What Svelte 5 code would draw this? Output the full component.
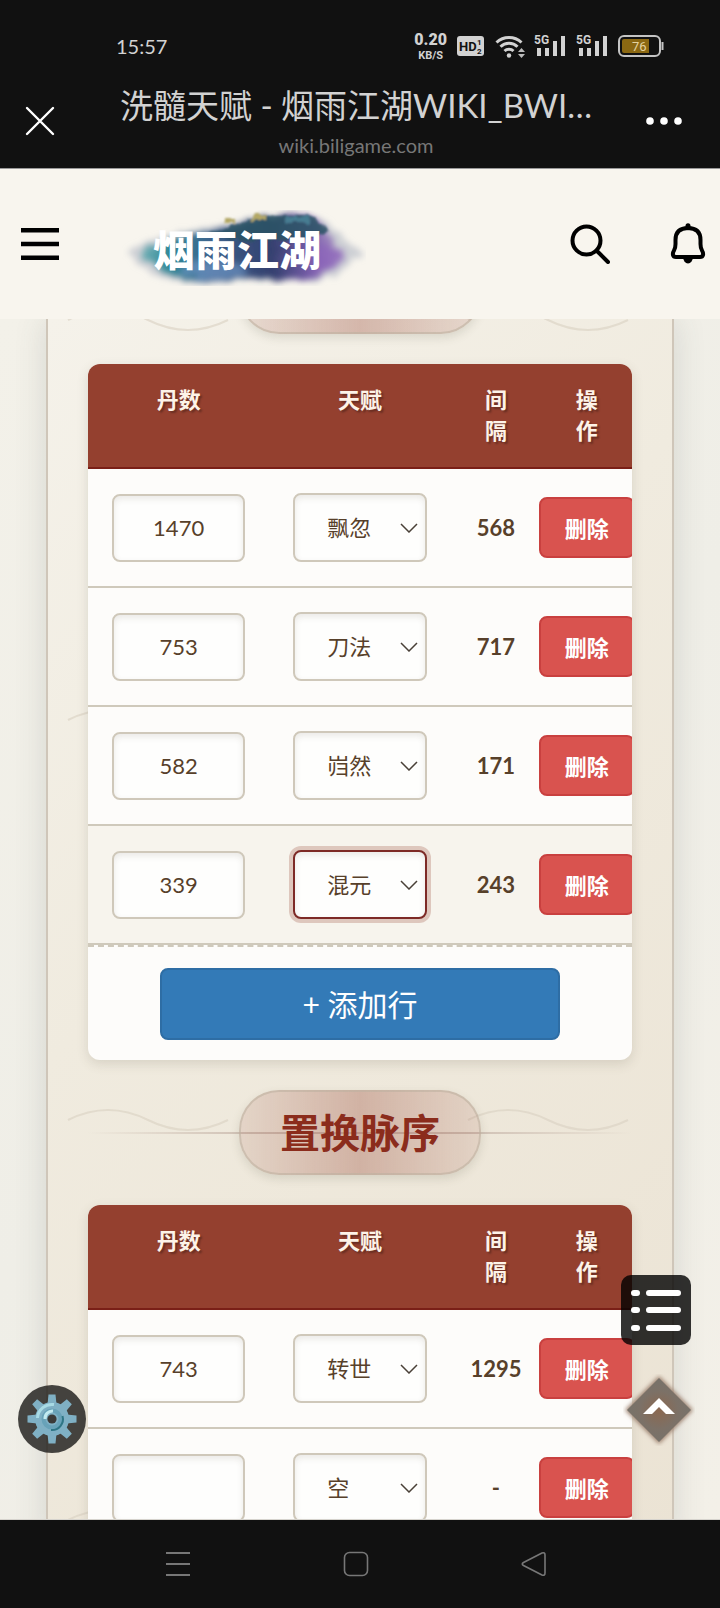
<script lang="ts">
  type Fila = { dan: string; talento: string; intervalo: string; activa?: boolean };

  const talentos = ['飘忽', '刀法', '岿然', '混元', '转世', '空'];

  let primera: Fila[] = $state([
    { dan: '1470', talento: '飘忽', intervalo: '568' },
    { dan: '753', talento: '刀法', intervalo: '717' },
    { dan: '582', talento: '岿然', intervalo: '171' },
    { dan: '339', talento: '混元', intervalo: '243', activa: true }
  ]);

  let segunda: Fila[] = $state([
    { dan: '743', talento: '转世', intervalo: '1295' },
    { dan: '', talento: '空', intervalo: '-' }
  ]);

  function agregar(filas: Fila[]) {
    filas.push({ dan: '', talento: '空', intervalo: '-' });
  }
</script>

{#snippet tabla(filas: Fila[])}
  <table>
    <thead>
      <tr>
        <th class="wide">丹数</th>
        <th class="wide">天赋</th>
        <th>间隔</th>
        <th>操作</th>
      </tr>
    </thead>
    <tbody>
      {#each filas as fila, i}
        <tr class:active={fila.activa}>
          <td><input type="text" inputmode="numeric" aria-label="丹数" bind:value={fila.dan} /></td>
          <td>
            <select aria-label="天赋" bind:value={fila.talento}>
              {#each talentos as t}
                <option value={t}>{t}</option>
              {/each}
            </select>
          </td>
          <td class="gap">{fila.intervalo}</td>
          <td>
            <div class="action">
              <button class="delete" onclick={() => filas.splice(i, 1)}>删除</button>
            </div>
          </td>
        </tr>
      {/each}
    </tbody>
  </table>
{/snippet}

{#snippet senal()}
  <svg width="32" height="24" viewBox="0 0 32 24" fill="#d2d2d2">
    <text x="0" y="10" font-size="12" font-weight="700">5G</text>
    <rect x="3" y="14" width="4" height="8" />
    <rect x="11" y="14" width="4" height="8" />
    <rect x="19" y="7" width="4" height="15" />
    <rect x="27" y="2" width="4" height="20" />
  </svg>
{/snippet}

<div class="phone">
  <div class="status">
    <span class="clock">15:57</span>
    <div class="indicators">
      <div class="speed"><b>0.20</b><span>KB/S</span></div>
      <svg width="28" height="20" viewBox="0 0 28 20">
        <rect width="27" height="20" rx="3" fill="#d2d2d2" />
        <text x="2" y="15" font-size="13" font-weight="700" fill="#111">HD</text>
        <text x="20" y="9" font-size="8" font-weight="700" fill="#111">1</text>
        <text x="20" y="18" font-size="8" font-weight="700" fill="#111">2</text>
      </svg>
      <svg class="wifi" width="31" height="25" viewBox="0 0 31 25" fill="none" stroke="#d2d2d2" stroke-width="3">
        <path d="M1.5 8.5a18 18 0 0 1 25 0M5.5 12.8a12 12 0 0 1 17 0M9.5 17a6.5 6.5 0 0 1 9 0" />
        <circle cx="14" cy="21.5" r="2.2" fill="#d2d2d2" stroke="none" />
        <path d="M23 18l3.5-4 3.5 4zM23 20l3.5 4 3.5-4z" fill="#bbb" stroke="none" />
      </svg>
      {@render senal()}
      {@render senal()}
      <svg width="46" height="22" viewBox="0 0 46 22">
        <rect x="1" y="1" width="41" height="20" rx="5" fill="none" stroke="#c4c4c4" stroke-width="2" />
        <path d="M44.5 7v8" stroke="#c4c4c4" stroke-width="2" />
        <path d="M6 4h25v14H6a2 2 0 0 1-2-2V6a2 2 0 0 1 2-2z" fill="#8b6812" />
        <text x="14" y="16" font-size="13" fill="#e5d3a0">76</text>
      </svg>
    </div>
  </div>

  <div class="titlebar">
    <button class="plain close" aria-label="关闭">
      <svg width="30" height="30" viewBox="0 0 30 30" stroke="#fff" stroke-width="2.4" stroke-linecap="round">
        <path d="M2 2l26 26M28 2L2 28" />
      </svg>
    </button>
    <div class="heading">
      <div class="page-title">洗髓天赋 - 烟雨江湖WIKI_BWI…</div>
      <div class="url">wiki.biligame.com</div>
    </div>
    <button class="plain" aria-label="更多">
      <svg width="36" height="10" viewBox="0 0 36 10" fill="#fff">
        <circle cx="4" cy="5" r="3.8" /><circle cx="18" cy="5" r="3.8" /><circle cx="32" cy="5" r="3.8" />
      </svg>
    </button>
  </div>

  <header class="site">
    <button class="plain" aria-label="菜单">
      <svg width="40" height="34" viewBox="0 0 40 34" stroke="#000" stroke-width="4.4">
        <path d="M1 3.2h38M1 17h38M1 30.8h38" />
      </svg>
    </button>
    <a class="logo" href="#top" aria-label="烟雨江湖">
      <svg width="244" height="76" viewBox="0 0 244 76">
        <defs>
          <filter id="ink" x="-10%" y="-20%" width="120%" height="140%">
            <feTurbulence type="fractalNoise" baseFrequency="0.09" numOctaves="3" seed="4" />
            <feDisplacementMap in="SourceGraphic" scale="10" xChannelSelector="R" yChannelSelector="G" />
            <feGaussianBlur stdDeviation="3" />
          </filter>
          <filter id="speckle" x="-10%" y="-20%" width="120%" height="140%">
            <feTurbulence type="fractalNoise" baseFrequency="0.12" numOctaves="2" seed="9" />
            <feDisplacementMap in="SourceGraphic" scale="8" xChannelSelector="R" yChannelSelector="G" />
            <feGaussianBlur stdDeviation="1" />
          </filter>
          <linearGradient id="wash" x1="0" x2="1" y1="0" y2="0">
            <stop offset="0" stop-color="#7fb7bb" />
            <stop offset="0.15" stop-color="#2f8a98" />
            <stop offset="0.35" stop-color="#3d628c" />
            <stop offset="0.65" stop-color="#34406f" />
            <stop offset="0.85" stop-color="#7d5fae" />
            <stop offset="1" stop-color="#b3a0c6" />
          </linearGradient>
        </defs>
        <g filter="url(#ink)">
          <path d="M4 44Q30 24 72 20Q110 14 134 6H194L216 22Q226 34 242 42Q226 54 214 66L190 72Q150 66 110 70Q70 76 40 68Q14 56 4 44z" fill="#aab0c0" opacity="0.55" />
          <path d="M16 44Q44 26 84 21Q120 14 142 6H192Q208 22 216 38Q228 44 214 52Q200 70 180 71Q150 68 108 70Q66 72 44 64Q30 52 16 44z" fill="url(#wash)" />
          <ellipse cx="92" cy="60" rx="34" ry="9" fill="#6c93c2" opacity="0.7" />
          <ellipse cx="206" cy="48" rx="16" ry="12" fill="#8c62bb" opacity="0.7" />
        </g>
        <g filter="url(#speckle)">
          <path d="M84 24Q118 14 134 5H190L206 22Q180 32 150 30Q116 34 84 24z" fill="#2c5364" opacity="0.85" />
          <path d="M102 8h12v5h-12zM130 4h13v6h-13z" fill="#b4a866" />
          <path d="M164 6h22v7h-22z" fill="#477b91" />
        </g>
        <text x="31" y="56" font-size="42" font-weight="900" fill="#fff">烟雨江湖</text>
      </svg>
    </a>
    <button class="plain search" aria-label="搜索">
      <svg width="40" height="40" viewBox="0 0 40 40" fill="none" stroke="#000" stroke-width="4" stroke-linecap="round">
        <circle cx="16.5" cy="16.5" r="14" />
        <path d="M27 27l11 11" />
      </svg>
    </button>
    <button class="plain" aria-label="通知">
      <svg width="36" height="42" viewBox="0 0 36 42" fill="none" stroke="#000" stroke-width="4" stroke-linejoin="round">
        <path d="M5.5 21V17C5.5 9 10 5 18 5S30.5 9 30.5 17V21Q30.5 25 32 27.5T33 32Q32.5 34 30 34H6Q3.5 34 3 32T4 27.5T5.5 21z" />
        <path d="M18 2.8v2" stroke-width="5" stroke-linecap="round" />
        <path d="M13 34h10a5 6.5 0 0 1-10 0z" fill="#000" stroke="none" />
      </svg>
    </button>
  </header>

  <main>
    <div class="panel">
      <div class="pill previous"></div>
      <section class="card">
        {@render tabla(primera)}
        <div class="footer">
          <button class="add" onclick={() => agregar(primera)}>+ 添加行</button>
        </div>
      </section>

      <div class="divider"><h2 class="pill">置换脉序</h2></div>

      <section class="card">
        {@render tabla(segunda)}
      </section>
    </div>

    <button class="floating settings" aria-label="设置">
      <svg width="50" height="50" viewBox="0 0 50 50">
        <g fill="#7fb0c4">
          {#each [0, 45, 90, 135] as angulo}
            <path d="M21.5 0.5h7l1 10v29l-1 10h-7l-1-10v-29z" transform="rotate({angulo} 25 25)" />
          {/each}
          <circle cx="25" cy="25" r="17" />
        </g>
        <path d="M10.5 24A14.5 14.5 0 0 1 27 10.6" fill="none" stroke="#a9dbe5" stroke-width="3" />
        <circle cx="25" cy="25" r="8.5" fill="none" stroke="#68a2b8" stroke-width="4" />
        <path d="M18 25a7.5 7.5 0 0 1 8-8" fill="none" stroke="#c2eaf0" stroke-width="3" />
        <path d="M35.5 22A11 11 0 0 1 24 36" fill="none" stroke="#2f7585" stroke-width="2" />
        <circle cx="25" cy="25" r="4.6" fill="#3b3a38" />
      </svg>
    </button>
    <button class="floating toc" aria-label="目录">
      <svg width="52" height="44" viewBox="0 0 52 44" stroke="#fff" stroke-width="6" stroke-linecap="round">
        <path d="M4 5h3M19 5h29M4 22h3M19 22h29M4 40h3M19 40h29" />
      </svg>
    </button>
    <button class="floating top" aria-label="返回顶部">
      <svg width="72" height="72" viewBox="0 0 72 72">
        <defs>
          <radialGradient id="glow">
            <stop offset="0" stop-color="#8b6850" />
            <stop offset="0.6" stop-color="#7c7167" />
            <stop offset="1" stop-color="#77726a" />
          </radialGradient>
          <filter id="soft" x="-10%" y="-10%" width="120%" height="120%"><feGaussianBlur stdDeviation="2" /></filter>
        </defs>
        <path d="M36 2L70 36L36 70L2 36z" fill="#9d8270" filter="url(#soft)" />
        <path d="M36 4L68 36L36 68L4 36z" fill="url(#glow)" />
        <path d="M20 40L36 24L52 40H43L36 33L29 40z" fill="#fff" />
      </svg>
    </button>
  </main>

  <nav>
    <button class="plain" aria-label="最近任务">
      <svg width="26" height="26" viewBox="0 0 26 26" stroke="#777" stroke-width="2"><path d="M1 2h24M1 13h24M1 24h24" /></svg>
    </button>
    <button class="plain" aria-label="主屏幕">
      <svg width="26" height="26" viewBox="0 0 26 26" fill="none" stroke="#777" stroke-width="1.6"><rect x="1.5" y="1.5" width="23" height="23" rx="5" /></svg>
    </button>
    <button class="plain" aria-label="返回">
      <svg width="26" height="26" viewBox="0 0 26 26" fill="none" stroke="#777" stroke-width="1.6" stroke-linejoin="round">
        <path d="M2.5 11.5L21 2Q24 1 24 4V22Q24 25 21 24L2.5 14.5Q0 13 2.5 11.5z" />
      </svg>
    </button>
  </nav>
</div>

<style>
  :global(body) {
    background: #111;
  }

  .phone {
    display: flex;
    flex-direction: column;
    height: 100vh;
    overflow: hidden;
    font-family: Lato, 'Noto Sans CJK SC', sans-serif;
    color: #57402a;
  }

  button,
  input,
  select {
    box-sizing: border-box;
    font-family: inherit;
    margin: 0;
  }

  svg {
    display: block;
  }

  .plain {
    display: flex;
    justify-content: center;
    padding: 0;
    border: 0;
    background: none;
  }

  .status {
    display: flex;
    align-items: center;
    justify-content: space-between;
    height: 56px;
    padding: 18px 56px 0 116px;
    background: #111;
    color: #d2d2d2;
  }

  .clock {
    font-size: 20px;
  }

  .indicators {
    display: flex;
    align-items: center;
    gap: 10px;
    font-family: Roboto, sans-serif;
  }

  .indicators .wifi {
    margin-right: -2px;
  }

  .speed {
    display: flex;
    flex-direction: column;
    align-items: center;
    font-size: 11px;
    line-height: 13px;
    font-weight: 700;
  }

  .speed b {
    font-size: 16px;
    line-height: 19px;
  }

  .titlebar {
    display: grid;
    grid-template-columns: 104px minmax(0, 1fr) 112px;
    align-items: center;
    height: 94px;
    background: #111;
    border-bottom: 1px solid #999;
  }

  .close {
    justify-content: flex-start;
    padding-left: 25px;
  }

  .heading {
    text-align: center;
    padding-top: 4px;
  }

  .page-title {
    font-size: 33px;
    line-height: 44px;
    color: #d2d2d2;
    white-space: nowrap;
  }

  .url {
    font-size: 20px;
    line-height: 36px;
    color: #777;
  }

  .site {
    position: relative;
    z-index: 1;
    display: flex;
    align-items: center;
    flex: none;
    height: 150px;
    padding: 0 14px 0 20px;
    background: #f8f5ee;
  }

  .logo {
    margin-left: 62px;
    padding-top: 8px;
  }

  .search {
    margin-left: auto;
    margin-right: 60px;
  }

  main {
    position: relative;
    flex: 1;
    min-height: 0;
    overflow: hidden;
    background: linear-gradient(135deg, #f3f1e9, #efeee7 50%, #f3f0e8);
    border-bottom: 1px solid #d6d3cd;
  }

  .panel {
    display: flex;
    flex-direction: column;
    margin: 0 46px;
    padding: 0 40px;
    border: solid #cfc6b9;
    border-width: 0 2px;
    background:
      url("data:image/svg+xml,%3Csvg xmlns='http://www.w3.org/2000/svg' width='400' height='400'%3E%3Cpath d='M20 50Q60 30 100 50T180 50' fill='none' stroke='%23d8d0c2' stroke-opacity='.6' stroke-width='2'/%3E%3C/svg%3E") 0 -49px,
      linear-gradient(135deg, #f5f2ea 0%, #f0ebdf 40%, #ebe3d4 100%);
    box-shadow: 0 0 30px rgba(70, 80, 80, 0.16);
  }

  .pill {
    box-sizing: border-box;
    align-self: center;
    width: fit-content;
    height: 85px;
    margin: 0;
    padding: 0 39px;
    border: 2px solid rgba(190, 176, 160, 0.6);
    border-radius: 40px;
    background: linear-gradient(90deg, rgba(148, 64, 47, 0.12), rgba(148, 64, 47, 0.32) 50%, rgba(148, 64, 47, 0.12));
    box-shadow: 0 4px 10px rgba(80, 80, 60, 0.15);
    color: #8b2c1c;
    font-size: 40px;
    line-height: 83px;
    font-weight: 700;
  }

  .previous {
    width: 242px;
    margin: -70px 0 30px;
  }

  .divider {
    display: flex;
    justify-content: center;
    margin: 30px 0;
    background: linear-gradient(90deg, transparent, #cfc0b4 30%, #cfc0b4 70%, transparent) center / 100% 2px no-repeat;
  }

  .card {
    overflow: hidden;
    border-radius: 12px;
    background: #fdfcfa;
    box-shadow: 0 4px 12px rgba(90, 80, 60, 0.16);
  }

  table {
    width: 100%;
    table-layout: fixed;
    border-collapse: separate;
    border-spacing: 0;
  }

  th {
    padding: 20px 24px 21px;
    border-bottom: 2px solid #7a1f17;
    background: #94402f;
    color: #fdf3e8;
    font-size: 22px;
    line-height: 31px;
    font-weight: 700;
    vertical-align: top;
    text-shadow: 2px 2px 2px rgba(0, 0, 0, 0.3);
  }

  .wide {
    width: 24.5%;
  }

  th:not(.wide) {
    width: 7.85%;
  }

  td {
    padding: 24px;
    border-bottom: 2px solid #cfc9bb;
    text-align: center;
    font-size: 22px;
  }

  .active td {
    background: #f7f4ed;
  }

  .gap {
    padding: 0;
    font-weight: 700;
  }

  input,
  select {
    display: block;
    width: 100%;
    border: 2px solid #cfc8ba;
    border-radius: 8px;
    background-color: #fefefd;
    box-shadow: inset 0 3px 6px rgba(60, 50, 30, 0.1);
    color: #57402a;
    font-size: 22px;
    outline: none;
  }

  input {
    height: 68px;
    padding: 0;
    text-align: center;
  }

  select {
    height: 69px;
    padding: 0 0 0 32px;
    appearance: none;
    background-image: url("data:image/svg+xml,%3Csvg xmlns='http://www.w3.org/2000/svg' width='18' height='10'%3E%3Cpath d='M1 1L9 9L17 1' fill='none' stroke='%23494038' stroke-width='1.5'/%3E%3C/svg%3E");
    background-repeat: no-repeat;
    background-position: right 7px center;
  }

  .active select {
    border-color: #7d2a26;
    box-shadow: 0 0 0 4px rgba(148, 64, 47, 0.25), inset 0 3px 6px rgba(60, 50, 30, 0.1);
  }

  .action {
    display: flex;
    justify-content: center;
  }

  .delete {
    flex: none;
    height: 61px;
    padding: 0 24px 2px;
    border: 2px solid #c9403f;
    border-radius: 8px;
    background: #d9534f;
    color: #fff;
    font-size: 22px;
    font-weight: 700;
  }

  .footer {
    display: flex;
    justify-content: center;
    padding: 21px 0 20px;
    border-top: 2px dashed #cfc9bb;
  }

  .add {
    width: 400px;
    height: 72px;
    padding-bottom: 3px;
    border: 2px solid #2e6da4;
    border-radius: 8px;
    background: #337ab7;
    color: #fff;
    font-size: 30px;
  }

  .floating {
    position: absolute;
    display: flex;
    align-items: center;
    justify-content: center;
    padding: 0;
    border: 0;
    background: none;
  }

  .settings {
    left: 18px;
    bottom: 66px;
    width: 68px;
    height: 68px;
    border-radius: 50%;
    background: rgba(30, 29, 27, 0.82);
  }

  .toc {
    right: 29px;
    bottom: 174px;
    width: 70px;
    height: 70px;
    border-radius: 10px;
    background: rgba(0, 0, 0, 0.8);
  }

  .top {
    right: 25px;
    bottom: 73px;
  }

  nav {
    display: flex;
    align-items: center;
    justify-content: space-around;
    height: 88px;
    padding: 0 97px 0 89px;
    background: #111;
  }
</style>
